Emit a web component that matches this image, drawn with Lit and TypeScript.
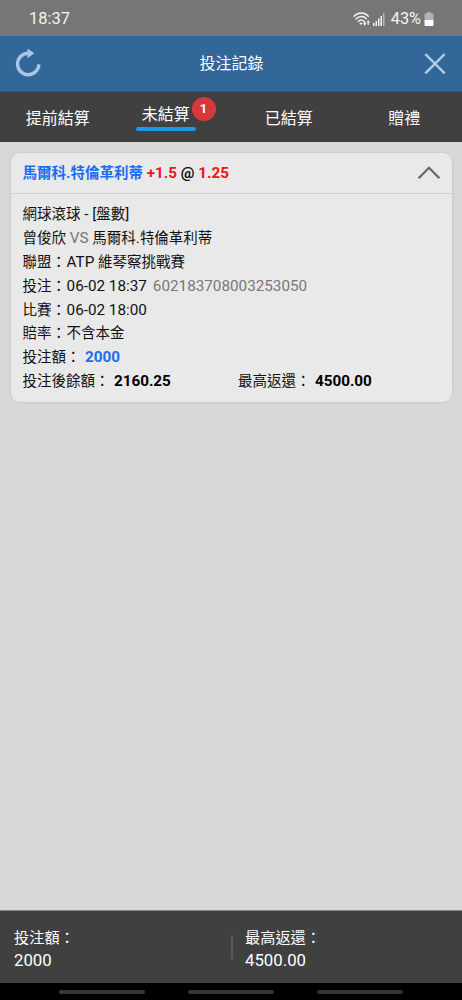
import { LitElement, html, css, svg } from "lit";
import { customElement } from "lit/decorators.js";

/** Wraps Latin runs so that they are set slightly larger than the Chinese text. */
const mixed = (text: string) =>
  text
    .split(/([\x20-\x7e]+)/)
    .filter((part) => part !== "")
    .map((part) => (/^[\x20-\x7e]/.test(part) ? html`<span class="latin">${part}</span>` : part));

@customElement("app-root")
export class AppRoot extends LitElement {
  static styles = css`
    :host {
      display: flex;
      flex-direction: column;
      height: 1000px;
      width: 100%;
      overflow: hidden;
      background: #d8d8d8;
      font-family: Roboto, "Noto Sans CJK TC", sans-serif;
      color: #fff;
    }
    * { box-sizing: border-box; }
    svg { display: block; flex: none; }
    .status {
      height: 36px;
      flex: none;
      background: #767676;
      color: #f4f4f4;
      display: flex;
      align-items: center;
      padding: 2px 28px 0 29px;
      font-size: 16.5px;
      line-height: 20px;
    }
    .clock { flex: 1; }
    .percent { margin: 0 3px 0 6px; font-size: 16.3px; }
    .wifi { margin-right: 3px; }
    .title-bar {
      height: 56px;
      flex: none;
      background: #336699;
      border-bottom: 1px solid #31526f;
      display: flex;
      align-items: center;
      justify-content: space-between;
      padding: 0 16px 0 14px;
      font-size: 16px;
    }
    .title { padding: 0 3px 3px 0; }
    .tabs {
      height: 50px;
      flex: none;
      background: #404040;
      display: grid;
      grid-template-columns: repeat(4, 1fr);
      font-size: 16px;
      line-height: 24px;
    }
    .tab { text-align: center; padding-top: 15px; position: relative; }
    .tab.active { padding: 11px 15px 0 0; }
    .underline {
      display: block;
      width: 60px;
      height: 4px;
      border-radius: 2px;
      background: #159de0;
      margin: 0 auto;
    }
    .badge {
      position: absolute;
      left: 76px;
      top: 5px;
      width: 24px;
      height: 24px;
      border-radius: 50%;
      background: #d8383c;
      font-size: 13px;
      font-weight: 700;
      line-height: 23px;
    }
    .content { flex: 1; padding: 11px 10px 0 11px; }
    .card {
      height: 249px;
      border-radius: 9px;
      background: #e9e9e9;
      box-shadow: 0 0 3px rgba(0, 0, 0, 0.12);
      color: #111;
      font-size: 14.5px;
      line-height: 24px;
    }
    .card-head {
      height: 41px;
      border-bottom: 1px solid #d2d2d2;
      display: flex;
      justify-content: space-between;
      align-items: center;
      padding: 0 11px 0 11.5px;
      font-weight: 700;
      white-space: pre;
    }
    .pick { padding-top: 1px; }
    .details { padding: 9.1px 12px 0 11.5px; }
    .row { height: 23.89px; white-space: pre; display: flex; align-items: baseline; }
    .half { width: 215.5px; }
    .latin { font-size: 15.25px; line-height: 0; white-space: pre; }
    .value { margin-left: 0.6px; }
    .blue { color: #1a6ff0; }
    .red { color: #f5101c; }
    .gray { color: #777; }
    .strong { font-weight: 700; color: #000; }
    .blue.strong { color: #1a6ff0; }
    .gap { margin-left: 6px; }
    .summary {
      height: 73px;
      flex: none;
      background: #404040;
      border-top: 1px solid #858585;
      display: flex;
      align-items: center;
      font-size: 15.2px;
      line-height: 23px;
    }
    .total { width: 231px; padding: 3px 0 0 14px; }
    .amount { font-size: 16.8px; line-height: 21px; }
    .divider { width: 2px; height: 24px; background: #595959; margin-right: -2px; }
    .nav {
      height: 17px;
      flex: none;
      background: #000;
      display: flex;
      justify-content: center;
      gap: 43px;
      padding-top: 7px;
    }
    .nav-bar { width: 86px; height: 4px; border-radius: 2px; background: #363636; }
  `;

  private wifi = svg`
    <g fill="none" stroke="#f4f4f4" stroke-width="1.4" stroke-linecap="round">
      <path d="M1 4.2C5-.1 11.5-.1 15.3 4.2"></path>
      <path d="M3 7C6 3.8 10.4 3.8 13.3 6.7"></path>
      <path d="M5.2 9.5C7 7.7 9.2 7.7 10.9 9.3"></path>
    </g>
    <path d="M6.3 11.3Q8 9.8 9.5 11.3L7.9 13Z" fill="#f4f4f4"></path>
    <path d="M10 11h1v-2h1.2v2h1.1L11.6 14Z M13.4 10.6L15.2 8.2 17 10.6H15.8V13H14.6V10.6Z" fill="#f4f4f4"></path>`;

  private total(label: string, amount: string) {
    return html`<div class="total"><div>${label}</div><div class="amount">${amount}</div></div>`;
  }

  render() {
    return html`
      <div class="status">
        <span class="clock">18:37</span>
        <svg class="wifi" width="17" height="14" viewBox="0 0 17 14">${this.wifi}</svg>
        <svg width="12" height="13" viewBox="0 0 12 13" fill="#f4f4f4">
          <path d="M0 10h1.5v3H0zM2.5 8H4v5H2.5zM5 5.5h1.5V13H5zM7.5 3H9v10H7.5z"></path>
          <path d="M10 0h1.5v13H10z" opacity=".5"></path>
        </svg>
        <span class="percent">43%</span>
        <svg width="10" height="14" viewBox="0 0 10 14">
          <path d="M3 0h4v1.5h1.5Q9.5 1.5 9.5 2.5V8H.5V2.5Q.5 1.5 1.5 1.5H3z" fill="#b2b2b2"></path>
          <path d="M.5 8h9v5q0 1-1 1h-7q-1 0-1-1z" fill="#fff"></path>
        </svg>
      </div>
      <div class="title-bar">
        <svg width="28" height="30" viewBox="0 0 28 30">
          <path d="M14 4.3A10.7 10.7 0 1 0 24.9 15.4" fill="none" stroke="#abc5e5" stroke-width="3.4"></path>
          <path d="M13.5 -.6L20.3 4.2 13.5 9.2Z" fill="#abc5e5"></path>
        </svg>
        <span class="title">投注記錄</span>
        <svg width="22" height="22" viewBox="0 0 22 22" fill="none" stroke="#b0ceec" stroke-width="2.4">
          <path d="M1.3 1L20.7 20.4M20.7 1L1.3 20.4"></path>
        </svg>
      </div>
      <div class="tabs">
        <div class="tab">提前結算</div>
        <div class="tab active">未結算<span class="underline"></span><span class="badge">1</span></div>
        <div class="tab">已結算</div>
        <div class="tab">贈禮</div>
      </div>
      <div class="content">
        <div class="card">
          <div class="card-head">
            <div class="pick"><span class="blue">${mixed("馬爾科.特倫革利蒂")}</span><span class="red">${mixed(" +1.5")}</span>${mixed(" @ ")}<span class="red">${mixed("1.25")}</span></div>
            <svg width="24" height="14" viewBox="0 0 24 14">
              <path d="M1.6 12.2L12 1.8 22.4 12.2" fill="none" stroke="#666" stroke-width="2.2"></path>
            </svg>
          </div>
          <div class="details">
            <div class="row">${mixed("網球滾球 - [盤數]")}</div>
            <div class="row">曾俊欣<span class="gray">${mixed(" VS ")}</span>${mixed("馬爾科.特倫革利蒂")}</div>
            <div class="row">聯盟：<span class="value">${mixed("ATP 維琴察挑戰賽")}</span></div>
            <div class="row">投注：<span class="value">${mixed("06-02 18:37")}</span><span class="gray gap">${mixed("602183708003253050")}</span></div>
            <div class="row">比賽：<span class="value">${mixed("06-02 18:00")}</span></div>
            <div class="row">賠率：<span class="value">不含本金</span></div>
            <div class="row">投注額：<span class="value blue strong">${mixed(" 2000")}</span></div>
            <div class="row">
              <div class="half">投注後餘額：<span class="value strong">${mixed(" 2160.25")}</span></div><div>最高返還：<span class="value strong">${mixed(" 4500.00")}</span></div>
            </div>
          </div>
        </div>
      </div>
      <div class="summary">
        ${this.total("投注額：", "2000")}
        <span class="divider"></span>
        ${this.total("最高返還：", "4500.00")}
      </div>
      <div class="nav">
        <span class="nav-bar"></span><span class="nav-bar"></span><span class="nav-bar"></span>
      </div>
    `;
  }
}
